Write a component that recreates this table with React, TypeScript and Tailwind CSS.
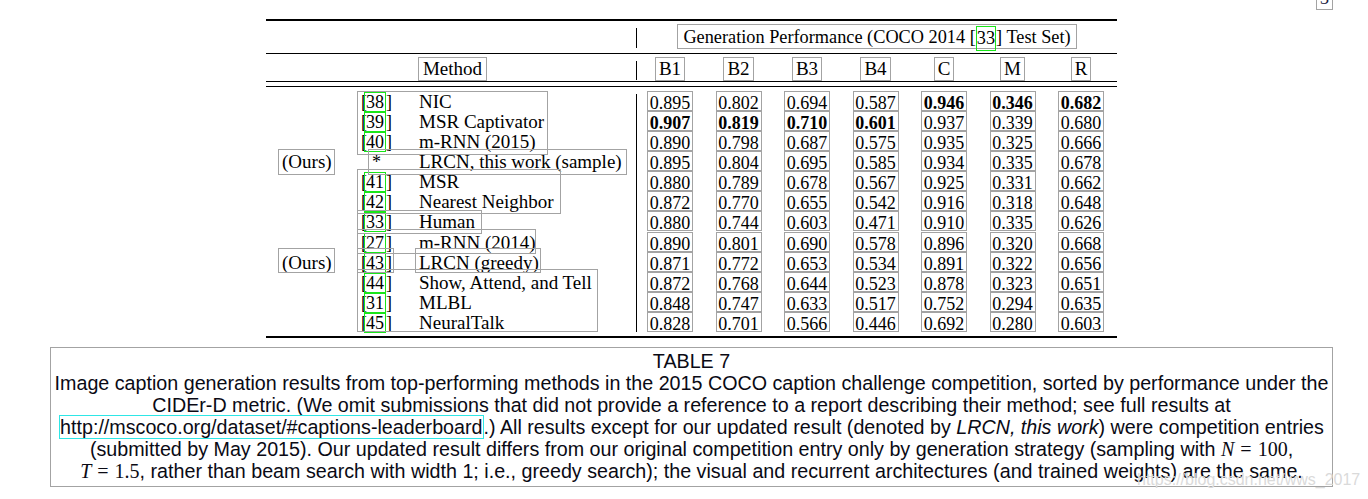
import React from 'react';

type Row = {
  ours?: boolean;
  cite: string;
  name: string;
  vals: string[];
  bold?: number[];
};

const rows: Row[] = [
  { cite: '38', name: 'NIC', vals: ['0.895', '0.802', '0.694', '0.587', '0.946', '0.346', '0.682'], bold: [4, 5, 6] },
  { cite: '39', name: 'MSR Captivator', vals: ['0.907', '0.819', '0.710', '0.601', '0.937', '0.339', '0.680'], bold: [0, 1, 2, 3] },
  { cite: '40', name: 'm-RNN (2015)', vals: ['0.890', '0.798', '0.687', '0.575', '0.935', '0.325', '0.666'] },
  { ours: true, cite: '*', name: 'LRCN, this work (sample)', vals: ['0.895', '0.804', '0.695', '0.585', '0.934', '0.335', '0.678'] },
  { cite: '41', name: 'MSR', vals: ['0.880', '0.789', '0.678', '0.567', '0.925', '0.331', '0.662'] },
  { cite: '42', name: 'Nearest Neighbor', vals: ['0.872', '0.770', '0.655', '0.542', '0.916', '0.318', '0.648'] },
  { cite: '33', name: 'Human', vals: ['0.880', '0.744', '0.603', '0.471', '0.910', '0.335', '0.626'] },
  { cite: '27', name: 'm-RNN (2014)', vals: ['0.890', '0.801', '0.690', '0.578', '0.896', '0.320', '0.668'] },
  { ours: true, cite: '43', name: 'LRCN (greedy)', vals: ['0.871', '0.772', '0.653', '0.534', '0.891', '0.322', '0.656'] },
  { cite: '44', name: 'Show, Attend, and Tell', vals: ['0.872', '0.768', '0.644', '0.523', '0.878', '0.323', '0.651'] },
  { cite: '31', name: 'MLBL', vals: ['0.848', '0.747', '0.633', '0.517', '0.752', '0.294', '0.635'] },
  { cite: '45', name: 'NeuralTalk', vals: ['0.828', '0.701', '0.566', '0.446', '0.692', '0.280', '0.603'] },
];

const metrics = ['B1', 'B2', 'B3', 'B4', 'C', 'M', 'R'];

// text-extraction boxes drawn over the left half of the table (page coords)
const overlayBoxes = [
  'left-[357px] top-[91px] w-[191px] h-[64px]',
  'left-[368px] top-[149px] w-[259px] h-[26px]',
  'left-[278px] top-[149px] w-[57px] h-[26px]',
  'left-[357px] top-[169px] w-[204px] h-[45px]',
  'left-[357px] top-[210px] w-[125px] h-[24px]',
  'left-[357px] top-[229px] w-[179px] h-[25px]',
  'left-[278px] top-[248px] w-[57px] h-[25px]',
  'left-[357px] top-[248px] w-[37px] h-[25px]',
  'left-[415px] top-[248px] w-[126px] h-[25px]',
  'left-[357px] top-[269px] w-[241px] h-[63px]',
];

function Cite({ n }: { n: string }) {
  if (n === '*') return <span className="pl-[11px]">*</span>;
  return (
    <span>
      [
      <span className="-ml-[3px] inline-block h-[20px] border border-[#19e619] px-px leading-[18px]">{n}</span>
      ]
    </span>
  );
}

function Math({ v, n }: { v: string; n: string }) {
  return (
    <span className="font-['Liberation_Serif','Times_New_Roman',serif] text-[20px]">
      <i>{v}</i>
      <span className="mx-[6px]">=</span>
      {n}
    </span>
  );
}

export default function App() {
  return (
    <div className="relative h-[499px] w-[1368px] overflow-hidden bg-white text-black">
      {/* cut-off page number box */}
      <div className="flex h-[19px]">
        <div className="ml-[1316px] h-[10px] w-[17px] overflow-hidden border border-t-0 border-[#a3a3a3] text-center font-['Liberation_Serif',serif] text-[18px] leading-[18px] text-[#1a1a40]">
          <span className="-mt-[11px] block">3</span>
        </div>
      </div>

      {/* table */}
      <div className="ml-[266px] w-[851px] font-['Liberation_Serif','Times_New_Roman',serif] text-[18px]">
        <div className="h-[2px] bg-black" />

        <div className="flex h-[32px]">
          <div className="w-[370px]" />
          <div className="mt-[7px] h-[20px] w-px bg-black" />
          <div className="ml-[40px] mt-[3px] flex h-[25px] w-[400px] justify-center border border-[#a3a3a3] pt-[2px] text-[18.3px] leading-[20px] whitespace-nowrap">
            Generation Performance (COCO 2014 [
            <span className="inline-block h-[25px] -mt-[1px] border border-[#19e619] leading-[22px]">33</span>
            ] Test Set)
          </div>
        </div>

        <div className="h-px bg-black" />

        <div className="flex h-[27px] text-[19px]">
          <div className="w-[370px]">
            <div className="ml-[152px] mt-[3px] h-[24px] w-[69px] border border-[#a3a3a3] pt-px text-center leading-[20px]">
              Method
            </div>
          </div>
          <div className="mt-[7px] h-[19px] w-px bg-black" />
          <div className="grid grid-cols-[repeat(7,46px)] gap-x-[22.5px] pl-[10px]">
            {metrics.map((m) => (
              <div key={m} className="mt-[3px] h-[24px] justify-self-center border border-[#a3a3a3] px-[3px] pt-px leading-[20px]">
                {m}
              </div>
            ))}
          </div>
        </div>

        <div className="h-px bg-black" />
        <div className="mt-[4px] h-px bg-black" />

        <div className="flex pt-[4px] pb-[4px]">
          <div className="grid w-[370px] grid-cols-[95px_58px_1fr]">
            {rows.map((r, i) => (
              <React.Fragment key={i}>
                <div className="h-[20px] pl-[16px] pt-px text-[19px] leading-[20px]">{r.ours ? '(Ours)' : ''}</div>
                <div className="h-[20px] pt-px leading-[20px]">
                  <Cite n={r.cite} />
                </div>
                <div className="h-[20px] pt-px text-[19px] leading-[20px] whitespace-nowrap">{r.name}</div>
              </React.Fragment>
            ))}
          </div>
          <div className="mt-[3px] h-[238px] w-px bg-black" />
          <div className="grid grid-cols-[repeat(7,46px)] gap-x-[22.5px] pl-[10px]">
            {rows.map((r, i) =>
              r.vals.map((v, j) => (
                <div
                  key={`${i}-${j}`}
                  className={`h-[20px] border border-[#a3a3a3] pt-[2px] text-center leading-[18px] ${r.bold?.includes(j) ? 'font-bold' : ''}`}
                >
                  {v}
                </div>
              )),
            )}
          </div>
        </div>

        <div className="h-[2px] bg-black" />
      </div>

      {/* caption */}
      <div className="ml-[50px] mt-[9px] h-[140px] w-[1283px] border border-[#a3a3a3] pt-[2px] text-center font-['Liberation_Sans',Arial,sans-serif] text-[19.7px] leading-[22px] text-[#0a0a14]">
        <div>TABLE 7</div>
        <div className="whitespace-nowrap">
          Image caption generation results from top-performing methods in the 2015 COCO caption challenge competition, sorted by performance under the
        </div>
        <div className="whitespace-nowrap">
          CIDEr-D metric. (We omit submissions that did not provide a reference to a report describing their method; see full results at
        </div>
        <div className="whitespace-nowrap">
          <span className="border border-[#2ee6e6]">http://mscoco.org/dataset/#captions-leaderboard</span>.) All results except for our updated
          result (denoted by <i>LRCN, this work</i>) were competition entries
        </div>
        <div className="whitespace-nowrap">
          (submitted by May 2015). Our updated result differs from our original competition entry only by generation strategy (sampling with{' '}
          <Math v="N" n="100" />,
        </div>
        <div className="whitespace-nowrap">
          <Math v="T" n="1.5" />, rather than beam search with width 1; i.e., greedy search); the visual and recurrent architectures (and trained
          weights) are the same.
        </div>
      </div>

      {overlayBoxes.map((c, i) => (
        <div key={i} className={`pointer-events-none absolute border border-[#a3a3a3] ${c}`} />
      ))}

      <div className="pointer-events-none absolute left-[1137px] top-[468px] font-['Liberation_Sans',Arial,sans-serif] text-[16px] text-[#dadada]">
        https://blog.csdn.net/wws_2017
      </div>
    </div>
  );
}
